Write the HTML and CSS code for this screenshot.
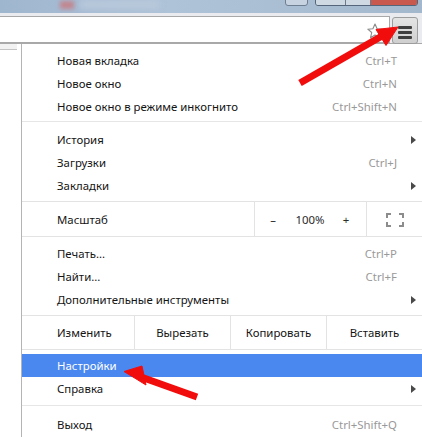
FILE: index.html
```html
<!DOCTYPE html>
<html lang="ru">
<head>
<meta charset="utf-8">
<link rel="stylesheet" href="styles.css">
</head>
<body>
<div class="window">
  <div class="titlebar">
    <div class="blur-tab"></div>
    <div class="blur-red"></div>
    <div class="blur-btn"></div>
    <div class="caption-btns">
      <div class="cb cb-min"></div>
      <div class="cb cb-max"></div>
      <div class="cb cb-close"></div>
    </div>
  </div>
  <div class="toolbar">
    <div class="omnibox">
      <svg class="star" width="16" height="16" viewBox="0 0 16 16"><polygon points="8,1 10.1,5.8 15.2,6.2 11.3,9.5 12.5,14.8 8,12 3.5,14.8 4.7,9.5 0.8,6.2 5.9,5.8" fill="#fff" stroke="#8a8a8a" stroke-width="1.1" stroke-linejoin="round"/></svg>
    </div>
    <div class="menu-btn"><span class="bar"></span><span class="bar"></span><span class="bar"></span></div>
  </div>
  <div class="content">
    <div class="page-left"><div class="page-tab"></div></div>
    <div class="menu">
      <div class="item"><span class="label">Новая вкладка</span><span class="key">Ctrl+T</span><span class="sub"></span></div>
      <div class="item"><span class="label">Новое окно</span><span class="key">Ctrl+N</span><span class="sub"></span></div>
      <div class="item"><span class="label">Новое окно в режиме инкогнито</span><span class="key">Ctrl+Shift+N</span><span class="sub"></span></div>
      <div class="sep"></div>
      <div class="item"><span class="label">История</span><span class="key"></span><span class="sub"><i class="tri"></i></span></div>
      <div class="item"><span class="label">Загрузки</span><span class="key">Ctrl+J</span><span class="sub"></span></div>
      <div class="item"><span class="label">Закладки</span><span class="key"></span><span class="sub"><i class="tri"></i></span></div>
      <div class="btnrow zoomrow">
        <div class="cell label-cell">Масштаб</div>
        <div class="cell zoom-cell"><span class="z-minus">–</span><span class="z-val">100%</span><span class="z-plus">+</span></div>
        <div class="cell fs-cell">
          <svg width="18" height="14" viewBox="0 0 18 14"><path d="M1 5V1H5M13 1H17V5M17 9V13H13M5 13H1V9" fill="none" stroke="#8c8c8c" stroke-width="2"/></svg>
        </div>
      </div>
      <div class="item"><span class="label">Печать...</span><span class="key">Ctrl+P</span><span class="sub"></span></div>
      <div class="item"><span class="label">Найти...</span><span class="key">Ctrl+F</span><span class="sub"></span></div>
      <div class="item"><span class="label">Дополнительные инструменты</span><span class="key"></span><span class="sub"><i class="tri"></i></span></div>
      <div class="btnrow editrow">
        <div class="cell label-cell">Изменить</div>
        <div class="cell ed">Вырезать</div>
        <div class="cell ed">Копировать</div>
        <div class="cell ed">Вставить</div>
      </div>
      <div class="item active"><span class="label">Настройки</span><span class="key"></span><span class="sub"></span></div>
      <div class="item"><span class="label">Справка</span><span class="key"></span><span class="sub"><i class="tri"></i></span></div>
      <div class="sep sep-last"></div>
      <div class="item"><span class="label">Выход</span><span class="key">Ctrl+Shift+Q</span><span class="sub"></span></div>
    </div>
  </div>
  <svg class="arrows" width="422" height="437" viewBox="0 0 422 437">
    <g fill="#f20d0d" stroke="#f20d0d">
      <line x1="300" y1="83" x2="382" y2="36" stroke-width="7"/>
      <polygon points="398,27 376,29.5 386,45.5" stroke-width="1" stroke-linejoin="round"/>
      <line x1="197" y1="397" x2="141" y2="377" stroke-width="7"/>
      <polygon points="124,371.5 142,366 146,385" stroke-width="1" stroke-linejoin="round"/>
    </g>
  </svg>
</div>
</body>
</html>
```
FILE: styles.css
```css
* { box-sizing: border-box; }
html, body { margin: 0; padding: 0; }
body {
  width: 422px;
  height: 437px;
  overflow: hidden;
  font-family: "Noto Sans", "Open Sans", sans-serif;
  font-size: 11.4px;
  color: #141414;
  background: #fff;
}
.window {
  position: relative;
  width: 422px;
  height: 437px;
  overflow: hidden;
}
.titlebar {
  position: relative;
  height: 13px;
  background: linear-gradient(90deg, #9fb6cf 0%, #aec2d8 40%, #a9bdd3 70%, #a3b7cd 100%);
  overflow: hidden;
}
.blur-tab {
  position: absolute;
  left: 80px; top: 0; width: 80px; height: 9px;
  background: #b9c9db;
  filter: blur(3px);
}
.blur-red {
  position: absolute;
  left: 60px; top: 1px; width: 14px; height: 8px;
  background: #c2868f;
  filter: blur(2px);
}
.blur-btn {
  position: absolute;
  left: 285px; top: -4px; width: 23px; height: 10px;
  border: 1px solid #6f7f92;
  border-radius: 3px;
  background: #c7d3e0;
}
.caption-btns {
  position: absolute;
  left: 315px; top: -4px;
  display: flex;
  height: 10px;
  border: 1px solid #56667a;
  border-radius: 3px;
  overflow: hidden;
}
.cb { height: 100%; }
.cb-min { width: 30px; background: #cfd9e4; border-right: 1px solid #6b7b8e; }
.cb-max { width: 25px; background: #cfd9e4; border-right: 1px solid #6b7b8e; }
.cb-close { width: 46px; background: #c9584f; }

.toolbar {
  display: flex;
  align-items: flex-start;
  height: 31px;
  padding-top: 3px;
  background: #e9ebee;
  border-bottom: 1px solid #a9a9a9;
}
.omnibox {
  width: 390px;
  height: 27px;
  background: #fff;
  border: 1px solid #a8a8a8;
  border-left: none;
  display: flex;
  align-items: center;
  justify-content: flex-end;
  padding-right: 6px;
  margin-bottom: -1px;
}
.star { display: block; margin-top: 2px; }
.menu-btn {
  margin-left: 2px;
  margin-top: 1px;
  width: 26px;
  height: 27px;
  border: 1px solid #9d9d9d;
  border-radius: 3px;
  background: linear-gradient(#e4e4e4, #cfcfcf);
  display: flex;
  flex-direction: column;
  align-items: center;
  gap: 2px;
  padding-top: 8px;
}
.bar {
  display: block;
  width: 14px;
  height: 3px;
  border-radius: 1px;
  background: #3e3e3e;
}

.content {
  display: flex;
  height: 393px;
}
.page-left {
  width: 21px;
  flex: none;
  background: #fff;
}
.page-tab {
  width: 17px;
  height: 6px;
  background: #f2f2f2;
  border-bottom: 1px solid #c4c4c4;
}
.menu {
  flex: 1;
  background: #fff;
  border-left: 1px solid #b4b4b4;
  padding-top: 5px;
}
.item {
  display: flex;
  align-items: center;
  height: 23px;
  padding-left: 35px;
  padding-right: 7px;
}
.label { flex: 1; white-space: nowrap; }
.key { color: #999; white-space: nowrap; }
.sub {
  width: 18px;
  flex: none;
  display: flex;
  justify-content: flex-end;
  align-items: center;
}
.tri {
  display: block;
  width: 0; height: 0;
  border-top: 4px solid transparent;
  border-bottom: 4px solid transparent;
  border-left: 5px solid #4a4a4a;
  margin-right: -1px;
}
.item.active {
  background: #4a87ee;
  color: #fff;
}
.sep {
  height: 1px;
  background: #e6e6e6;
  margin: 3px 0 6px;
}
.sep-last { margin: 5px 0 7px; }

.btnrow {
  display: flex;
  border-top: 1px solid #e3e3e3;
  border-bottom: 1px solid #e3e3e3;
}
.zoomrow { height: 36px; margin: 4px 0 5px; }
.editrow { height: 35px; margin: 4px 0 4px; }
.cell {
  display: flex;
  align-items: center;
}
.label-cell {
  flex: 1;
  padding-left: 35px;
}
.zoom-cell {
  width: 112px;
  border-left: 1px solid #e3e3e3;
  padding-left: 8px;
  color: #2a2a2a;
}
.z-minus { width: 20px; text-align: center; }
.z-val { width: 54px; text-align: center; }
.z-plus { width: 18px; text-align: center; }
.fs-cell {
  width: 56px;
  border-left: 1px solid #e3e3e3;
  justify-content: center;
  padding-top: 1px;
}
.fs-cell svg { display: block; }
.ed {
  width: 96px;
  border-left: 1px solid #e3e3e3;
  justify-content: center;
}
.arrows {
  position: absolute;
  left: 0; top: 0;
  pointer-events: none;
}
```
